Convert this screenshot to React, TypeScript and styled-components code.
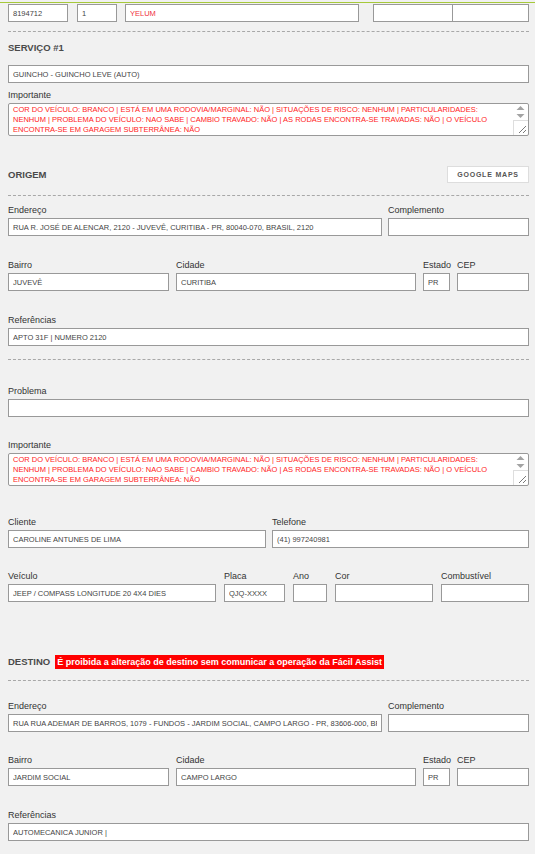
import styled, { createGlobalStyle } from 'styled-components';

const GlobalStyle = createGlobalStyle`
  html, body {
    margin: 0;
    padding: 0;
    background: #f1f1f1;
  }
  body {
    font-family: "Liberation Sans", Arial, sans-serif;
  }
  * {
    box-sizing: border-box;
  }
`;

const IMPORTANTE =
  'COR DO VEÍCULO: BRANCO | ESTÁ EM UMA RODOVIA/MARGINAL: NÃO | SITUAÇÕES DE RISCO: NENHUM | PARTICULARIDADES: NENHUM | PROBLEMA DO VEÍCULO: NAO SABE | CAMBIO TRAVADO: NÃO | AS RODAS ENCONTRA-SE TRAVADAS: NÃO | O VEÍCULO ENCONTRA-SE EM GARAGEM SUBTERRÂNEA: NÃO';

function NotesField({ value }: { value: string }) {
  return (
    <NotesBox>
      <Notes readOnly value={value} />
      <ScrollTrack>
        <Arrows>
          <svg width="9" height="14" viewBox="0 0 9 14">
            <path d="M4.5 1 L8.5 5 L0.5 5 Z" fill="#a3a3a3" />
            <path d="M0.5 9 L8.5 9 L4.5 13 Z" fill="#a3a3a3" />
          </svg>
        </Arrows>
        <Grip>
          <svg width="10" height="10" viewBox="0 0 10 10">
            <path d="M9 2 L2 9 M9 6 L6 9" stroke="#7a7a7a" strokeWidth="1" />
          </svg>
        </Grip>
      </ScrollTrack>
    </NotesBox>
  );
}

export default function App() {
  return (
    <>
      <GlobalStyle />
      <Page>
        <TopRow>
          <TopInput readOnly value="8194712" $w={60} />
          <TopInput readOnly value="1" $w={40} $ml={9} />
          <TopInput readOnly value="YELUM" $w={234} $ml={8} $red />
          <TopInput readOnly value="" $w={80} $ml={14} />
          <TopInput readOnly value="" $ml={-1} />
        </TopRow>

        <Divider $mt={9} />

        <SectionTitle $mt={10}>SERVIÇO #1</SectionTitle>
        <Row $cols="1fr" $mt={11}>
          <Input readOnly value="GUINCHO - GUINCHO LEVE (AUTO)" />
        </Row>
        <Row $cols="1fr" $mt={6}>
          <Field>
            <Label>Importante</Label>
            <NotesField value={IMPORTANTE} />
          </Field>
        </Row>

        <Header $mt={30}>
          <SectionTitle>ORIGEM</SectionTitle>
          <MapsButton type="button">GOOGLE MAPS</MapsButton>
        </Header>
        <Divider $mt={12} />

        <Row $cols="374px 1fr" $gap="6px" $mt={8}>
          <Field>
            <Label>Endereço</Label>
            <Input readOnly value="RUA R. JOSÉ DE ALENCAR, 2120 - JUVEVÊ, CURITIBA - PR, 80040-070, BRASIL, 2120" />
          </Field>
          <Field>
            <Label>Complemento</Label>
            <Input readOnly value="" />
          </Field>
        </Row>
        <Row $cols="161px 240px 27px 1fr" $gap="7px" $mt={23}>
          <Field>
            <Label>Bairro</Label>
            <Input readOnly value="JUVEVÊ" />
          </Field>
          <Field>
            <Label>Cidade</Label>
            <Input readOnly value="CURITIBA" />
          </Field>
          <Field>
            <Label>Estado</Label>
            <Input readOnly value="PR" />
          </Field>
          <Field>
            <Label>CEP</Label>
            <Input readOnly value="" />
          </Field>
        </Row>
        <Row $cols="1fr" $mt={23}>
          <Field>
            <Label>Referências</Label>
            <Input readOnly value="APTO 31F | NUMERO 2120" />
          </Field>
        </Row>
        <Divider $mt={13} />

        <Row $cols="1fr" $mt={25}>
          <Field>
            <Label>Problema</Label>
            <Input readOnly value="" />
          </Field>
        </Row>
        <Row $cols="1fr" $mt={22}>
          <Field>
            <Label>Importante</Label>
            <NotesField value={IMPORTANTE} />
          </Field>
        </Row>
        <Row $cols="258px 1fr" $gap="6px" $mt={30}>
          <Field>
            <Label>Cliente</Label>
            <Input readOnly value="CAROLINE ANTUNES DE LIMA" />
          </Field>
          <Field>
            <Label>Telefone</Label>
            <Input readOnly value="(41) 997240981" />
          </Field>
        </Row>
        <Row $cols="208px 61px 34px 98px 1fr" $gap="8px" $mt={22}>
          <Field>
            <Label>Veículo</Label>
            <Input readOnly value="JEEP / COMPASS LONGITUDE 20 4X4 DIES" />
          </Field>
          <Field>
            <Label>Placa</Label>
            <Input readOnly value="QJQ-XXXX" />
          </Field>
          <Field>
            <Label>Ano</Label>
            <Input readOnly value="" />
          </Field>
          <Field>
            <Label>Cor</Label>
            <Input readOnly value="" />
          </Field>
          <Field>
            <Label>Combustível</Label>
            <Input readOnly value="" />
          </Field>
        </Row>

        <Header $mt={53}>
          <TitleGroup>
            <SectionTitle>DESTINO</SectionTitle>
            <Warning>É proibida a alteração de destino sem comunicar a operação da Fácil Assist</Warning>
          </TitleGroup>
        </Header>
        <Divider $mt={11} />

        <Row $cols="374px 1fr" $gap="6px" $mt={19}>
          <Field>
            <Label>Endereço</Label>
            <Input readOnly value="RUA RUA ADEMAR DE BARROS, 1079 - FUNDOS - JARDIM SOCIAL, CAMPO LARGO - PR, 83606-000, BRASIL" />
          </Field>
          <Field>
            <Label>Complemento</Label>
            <Input readOnly value="" />
          </Field>
        </Row>
        <Row $cols="161px 240px 27px 1fr" $gap="7px" $mt={22}>
          <Field>
            <Label>Bairro</Label>
            <Input readOnly value="JARDIM SOCIAL" />
          </Field>
          <Field>
            <Label>Cidade</Label>
            <Input readOnly value="CAMPO LARGO" />
          </Field>
          <Field>
            <Label>Estado</Label>
            <Input readOnly value="PR" />
          </Field>
          <Field>
            <Label>CEP</Label>
            <Input readOnly value="" />
          </Field>
        </Row>
        <Row $cols="1fr" $mt={23}>
          <Field>
            <Label>Referências</Label>
            <Input readOnly value="AUTOMECANICA JUNIOR |" />
          </Field>
        </Row>
      </Page>
    </>
  );
}

const Page = styled.div`
  margin-top: 2px;
  border-top: 1px solid #a6c93a;
  padding: 0 6px 20px 8px;
  min-height: 852px;
`;

const Row = styled.div<{ $cols: string; $gap?: string; $mt: number }>`
  display: grid;
  grid-template-columns: ${(p) => p.$cols};
  column-gap: ${(p) => p.$gap || '0'};
  margin-top: ${(p) => p.$mt}px;
`;

const TopRow = styled.div`
  display: flex;
  margin-top: 1px;
`;

const Field = styled.div`
  display: flex;
  flex-direction: column;
  gap: 2px;
  min-width: 0;
`;

const Label = styled.label`
  font-size: 9px;
  line-height: 12px;
  color: #333;
  white-space: nowrap;
`;

const Input = styled.input<{ $red?: boolean }>`
  width: 100%;
  height: 18px;
  margin: 0;
  padding: 0 4px;
  border: 1px solid #999;
  border-radius: 0;
  background: #fff;
  font-family: "Liberation Sans", Arial, sans-serif;
  font-size: 7.5px;
  color: ${(p) => (p.$red ? '#f0303c' : '#444')};
  outline: none;
`;

const TopInput = styled(Input)<{ $w?: number; $ml?: number }>`
  flex: ${(p) => (p.$w ? `0 0 ${p.$w}px` : '1 1 0')};
  width: auto;
  min-width: 0;
  margin-left: ${(p) => p.$ml || 0}px;
`;

const NotesBox = styled.div`
  position: relative;
  height: 33px;
`;

const Notes = styled.textarea`
  width: 100%;
  height: 33px;
  margin: 0;
  padding: 1px 19px 0 4px;
  border: 1px solid #999;
  border-radius: 2px;
  background: #fff;
  font-family: "Liberation Sans", Arial, sans-serif;
  font-size: 7.5px;
  line-height: 10px;
  color: #f22;
  overflow: hidden;
  resize: none;
  outline: none;
  display: block;
`;

const ScrollTrack = styled.div`
  position: absolute;
  top: 1px;
  right: 1px;
  bottom: 1px;
  width: 15px;
  display: flex;
  flex-direction: column;
  justify-content: space-between;
  pointer-events: none;
`;

const Arrows = styled.div`
  display: flex;
  justify-content: center;
  padding-top: 1px;
`;

const Grip = styled.div`
  height: 15px;
  border-left: 1px solid #dedede;
  border-top: 1px solid #dedede;
  display: flex;
  align-items: flex-end;
  justify-content: flex-end;
  padding: 0 1px 1px 0;

  svg {
    display: block;
  }
`;

const Divider = styled.div<{ $mt: number }>`
  margin-top: ${(p) => p.$mt}px;
  border-top: 1px dashed #a8a8a8;
`;

const SectionTitle = styled.div<{ $mt?: number }>`
  margin-top: ${(p) => p.$mt || 0}px;
  font-size: 9.5px;
  line-height: 12px;
  font-weight: bold;
  color: #4a4a4a;
`;

const Header = styled.div<{ $mt: number }>`
  display: flex;
  align-items: center;
  justify-content: space-between;
  margin-top: ${(p) => p.$mt}px;
`;

const TitleGroup = styled.div`
  display: flex;
  align-items: center;
  gap: 5px;
`;

const MapsButton = styled.button`
  width: 82px;
  height: 17px;
  padding: 0;
  border: 1px solid #ddd;
  background: #fff;
  font-family: "Liberation Sans", Arial, sans-serif;
  font-size: 7px;
  font-weight: bold;
  letter-spacing: 0.8px;
  color: #555;
  cursor: pointer;
`;

const Warning = styled.span`
  display: inline-block;
  background: #ff0000;
  color: #fff;
  font-size: 9px;
  font-weight: bold;
  line-height: 14px;
  padding: 0 2px;
`;
